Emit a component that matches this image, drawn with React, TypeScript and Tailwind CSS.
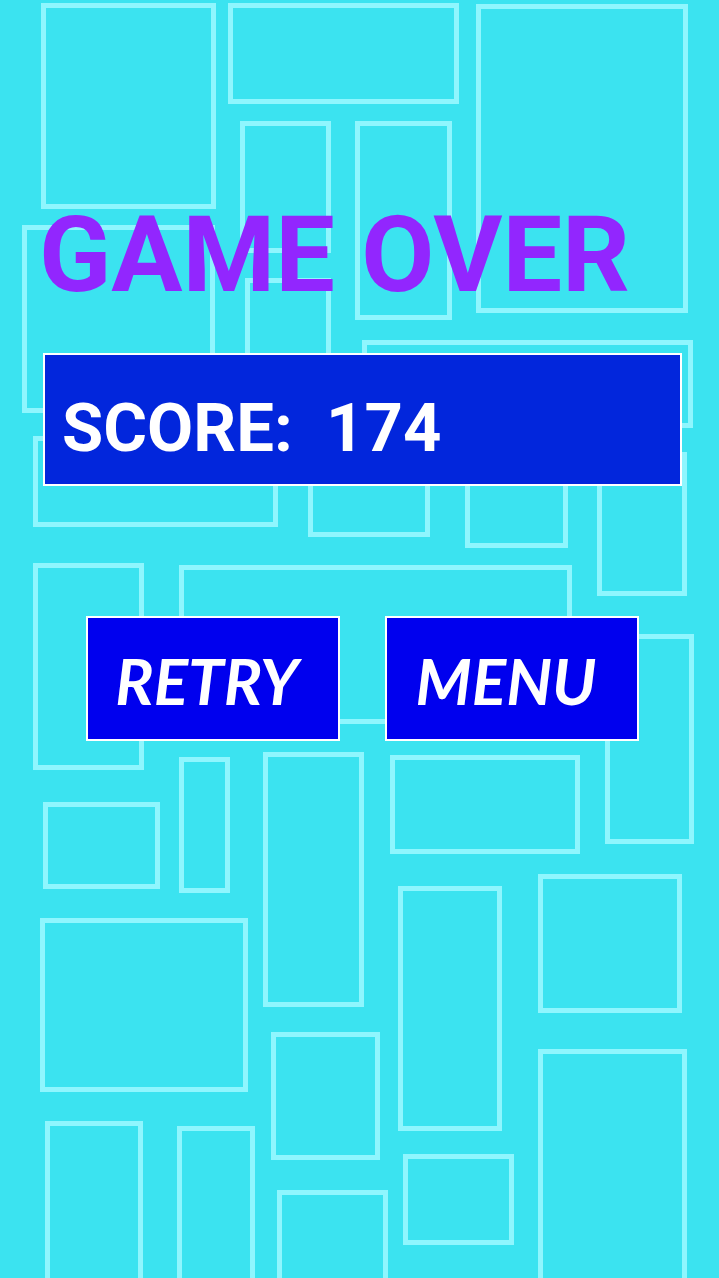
const tiles = [
    'left-[41px] top-[3px] w-[175px] h-[206px]',
    'left-[228px] top-[3px] w-[231px] h-[101px]',
    'left-[476px] top-[4px] w-[212px] h-[309px]',
    'left-[240px] top-[121px] w-[91px] h-[132px]',
    'left-[245px] top-[278px] w-[86px] h-[142px]',
    'left-[22px] top-[225px] w-[193px] h-[188px]',
    'left-[355px] top-[121px] w-[97px] h-[199px]',
    'left-[362px] top-[340px] w-[331px] h-[88px]',
    'left-[597px] top-[452px] w-[90px] h-[144px]',
    'left-[465px] top-[420px] w-[103px] h-[128px]',
    'left-[308px] top-[420px] w-[122px] h-[117px]',
    'left-[33px] top-[436px] w-[245px] h-[91px]',
    'left-[33px] top-[563px] w-[111px] h-[207px]',
    'left-[179px] top-[565px] w-[393px] h-[159px]',
    'left-[605px] top-[634px] w-[89px] h-[210px]',
    'left-[179px] top-[757px] w-[51px] h-[136px]',
    'left-[263px] top-[752px] w-[101px] h-[255px]',
    'left-[390px] top-[755px] w-[190px] h-[99px]',
    'left-[43px] top-[802px] w-[117px] h-[87px]',
    'left-[40px] top-[918px] w-[208px] h-[174px]',
    'left-[398px] top-[886px] w-[104px] h-[245px]',
    'left-[538px] top-[874px] w-[144px] h-[139px]',
    'left-[271px] top-[1032px] w-[109px] h-[128px]',
    'left-[277px] top-[1190px] w-[111px] h-[100px]',
    'left-[45px] top-[1121px] w-[98px] h-[169px]',
    'left-[177px] top-[1126px] w-[78px] h-[164px]',
    'left-[403px] top-[1154px] w-[111px] h-[91px]',
    'left-[538px] top-[1049px] w-[149px] h-[241px]'
];

const GameButton = ({ label }: { label: string }) => (
    <button
        type="button"
        className="flex h-[125px] w-[254px] items-center justify-center border-2 border-white bg-[#0000ee] pr-[12px] pt-[4px] font-['Lato',sans-serif] text-[64px] font-bold italic leading-none text-white"
    >
        {label}
    </button>
);

export default function App() {
    return (
        <div className="relative h-[1278px] w-full overflow-hidden bg-[#3be3f0]">
            {/* background tiles */}
            {tiles.map((pos) => (
                <div
                    key={pos}
                    className={`absolute border-[5px] border-[#8ff6fe] ${pos}`}
                />
            ))}

            <main className="relative flex flex-col pt-[202px] font-['Roboto',sans-serif]">
                <h1 className="ml-[39px] text-[106px] font-bold leading-none text-[#9226fe]">
                    GAME OVER
                </h1>

                <div className="ml-[43px] mt-[45px] h-[133px] w-[639px] border-2 border-white bg-[#0226dc] pl-[17px] pt-[40px]">
                    <p className="whitespace-pre text-[67px] font-bold leading-none text-white">
                        SCORE:  174
                    </p>
                </div>

                <div className="ml-[86px] mt-[130px] flex gap-[45px]">
                    <GameButton label="RETRY" />
                    <GameButton label="MENU" />
                </div>
            </main>
        </div>
    );
}
